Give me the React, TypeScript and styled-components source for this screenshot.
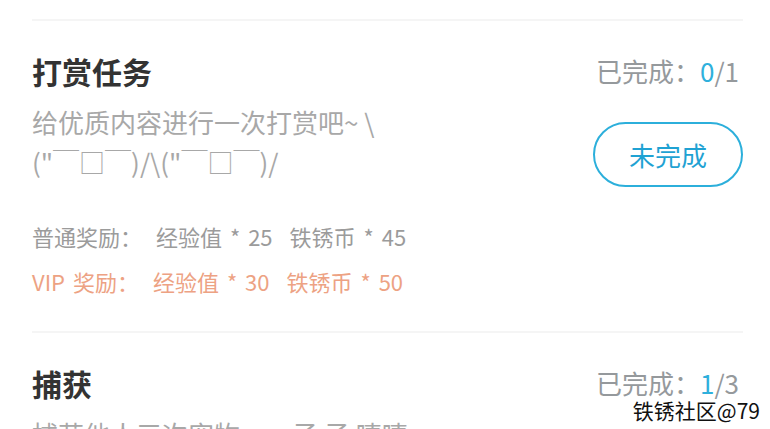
import React from 'react';
import styled, {createGlobalStyle} from 'styled-components';

interface Task {
    title: string;
    done: number;
    total: number;
    desc: string[];
    normal: [number, number];
    vip: [number, number];
}

const tasks: Task[] = [
    {
        title: '打赏任务',
        done: 0,
        total: 1,
        desc: ['给优质内容进行一次打赏吧~ \\', '("￣□￣)/\\("￣□￣)/'],
        normal: [25, 45],
        vip: [30, 50],
    },
    {
        title: '捕获',
        done: 1,
        total: 3,
        desc: ['捕获他人三次宠物……子 子 嘻嘻'],
        normal: [20, 30],
        vip: [25, 35],
    },
];

export default function App() {
    return (
        <>
            <GlobalStyle/>
            <Page>
                {tasks.map((task) => (
                    <TaskItem key={task.title}>
                        <Header>
                            <Title>{task.title}</Title>
                            <Progress>
                                {'已完成：'}
                                <ProgressNum>{task.done}</ProgressNum>
                                {`/${task.total}`}
                            </Progress>
                        </Header>
                        <Body>
                            <Info>
                                <Desc>
                                    {task.desc.map((line) => (
                                        <div key={line}>{line}</div>
                                    ))}
                                </Desc>
                                <Rewards>
                                    <RewardRow $color='#9b9b9b'>
                                        <RewardLabel>{'普通奖励：'}</RewardLabel>
                                        <RewardItem>{`经验值 * ${task.normal[0]}`}</RewardItem>
                                        <RewardItem>{`铁锈币 * ${task.normal[1]}`}</RewardItem>
                                    </RewardRow>
                                    <RewardRow $color='#eda283'>
                                        <RewardLabel>{'VIP 奖励：'}</RewardLabel>
                                        <RewardItem>{`经验值 * ${task.vip[0]}`}</RewardItem>
                                        <RewardItem>{`铁锈币 * ${task.vip[1]}`}</RewardItem>
                                    </RewardRow>
                                </Rewards>
                            </Info>
                            <StatusButton>{'未完成'}</StatusButton>
                        </Body>
                    </TaskItem>
                ))}
                <Watermark>{'铁锈社区@79'}</Watermark>
            </Page>
        </>
    );
}

const GlobalStyle = createGlobalStyle`
    html, body {
        margin: 0;
        padding: 0;
        background: #ffffff;
    }

    body {
        font-family: 'Noto Sans CJK SC', 'Noto Sans', sans-serif;
    }
`;

const Page = styled.div`
    position: relative;
    width: 770px;
    height: 429px;
    overflow: hidden;
    padding-top: 19px;
    box-sizing: border-box;
    background: #ffffff;
`;

const TaskItem = styled.div`
    margin: 0 27px 0 32px;
    padding: 30px 0 27px;
    border-top: 2px solid #f5f5f5;
`;

const Header = styled.div`
    display: flex;
    align-items: center;
    justify-content: space-between;
    height: 40px;
`;

const Title = styled.div`
    font-size: 30px;
    font-weight: 700;
    line-height: 40px;
    color: #333333;
`;

const Progress = styled.div`
    font-size: 26px;
    line-height: 30px;
    color: #95999c;
    margin-right: 4px;
`;

const ProgressNum = styled.span`
    color: #2fb0dc;
`;

const Body = styled.div`
    display: flex;
    justify-content: space-between;
    align-items: flex-start;
    margin-top: 11px;
`;

const Info = styled.div`
    display: flex;
    flex-direction: column;
`;

const Desc = styled.div`
    font-size: 26px;
    line-height: 40px;
    color: #a8a8a8;
    white-space: pre;
`;

const Rewards = styled.div`
    margin-top: 32px;
`;

const RewardRow = styled.div<{$color: string}>`
    display: flex;
    font-size: 22px;
    line-height: 45px;
    color: ${(p) => p.$color};
    white-space: pre;
    word-spacing: 3px;
`;

const RewardLabel = styled.span`
    margin-right: 14px;
`;

const RewardItem = styled.span`
    margin-right: 17px;
`;

const StatusButton = styled.button`
    width: 150px;
    height: 65px;
    margin-top: 20px;
    border: 2px solid #2cafdb;
    border-radius: 33px;
    background: #ffffff;
    color: #1fa2d3;
    font-family: inherit;
    font-size: 26px;
    padding: 0;
    flex-shrink: 0;
`;

const Watermark = styled.div`
    position: absolute;
    right: 10px;
    bottom: 8px;
    font-size: 21px;
    line-height: 22px;
    color: #111111;
`;
